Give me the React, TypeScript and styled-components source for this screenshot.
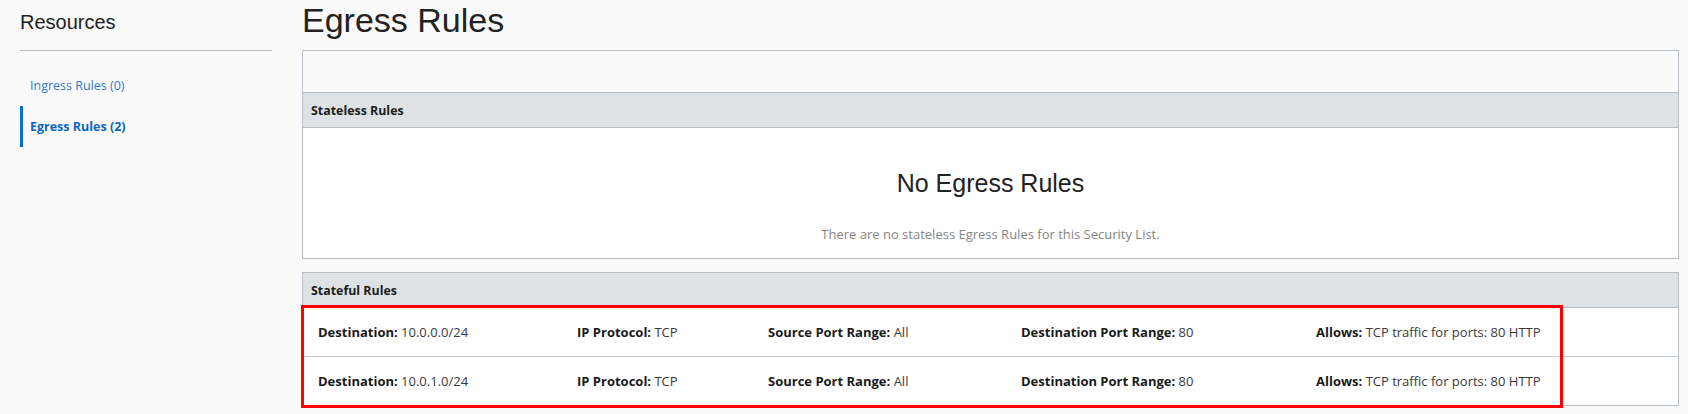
import React from "react";
import styled, { createGlobalStyle } from "styled-components";

const GlobalStyle = createGlobalStyle`
  * { box-sizing: border-box; }
  html, body {
    margin: 0;
    padding: 0;
    background: #fafafa;
    font-family: "Open Sans", "Noto Sans", sans-serif;
    color: #222;
  }
`;

const Page = styled.div`
  display: flex;
  gap: 30px;
  padding: 0 9px 0 20px;
  min-height: 414px;
`;

const Sidebar = styled.aside`
  width: 252px;
  flex-shrink: 0;
`;

const SidebarTitle = styled.h2`
  margin: 10px 0 0;
  font-family: "Liberation Sans", Arial, sans-serif;
  font-weight: 400;
  font-size: 20px;
  line-height: 24px;
  color: #222;
`;

const Divider = styled.hr`
  margin: 16px 0 0;
  border: 0;
  border-top: 1px solid #b4bbc3;
  height: 0;
`;

const NavList = styled.ul`
  list-style: none;
  margin: 14px 0 0;
  padding: 0;
`;

const NavItem = styled.li<{ $active?: boolean }>`
  height: 41px;
  display: flex;
  align-items: center;
  padding-left: 7px;
  border-left: 3px solid ${(p) => (p.$active ? "#0b6fd2" : "transparent")};
  font-size: 12.5px;
  font-weight: ${(p) => (p.$active ? 700 : 400)};
  color: ${(p) => (p.$active ? "#0a66c0" : "#2e7bcb")};
  cursor: pointer;
`;

const Main = styled.main`
  flex: 1;
  min-width: 0;
`;

const PageTitle = styled.h1`
  margin: 0;
  font-family: "Liberation Sans", Arial, sans-serif;
  font-weight: 400;
  font-size: 34px;
  line-height: 40px;
  color: #222;
`;

const Card = styled.section<{ $gap: number }>`
  margin-top: ${(p) => p.$gap}px;
  border: 1px solid #b7bdc4;
  background: #fff;
`;

const Toolbar = styled.div`
  height: 42px;
  background: #fafafa;
  border-bottom: 1px solid #b7bdc4;
`;

const SectionHeader = styled.div`
  height: 35px;
  display: flex;
  align-items: center;
  padding-left: 8px;
  background: #dfe2e5;
  border-bottom: 1px solid #b7bdc4;
  font-size: 12.4px;
  font-weight: 700;
  color: #1c1c1c;
`;

const EmptyBody = styled.div`
  padding: 40px 0 15px;
  text-align: center;
`;

const EmptyTitle = styled.div`
  font-family: "Liberation Sans", Arial, sans-serif;
  font-size: 25px;
  line-height: 30px;
  color: #222;
`;

const EmptyText = styled.div`
  margin-top: 27px;
  font-size: 13px;
  line-height: 18px;
  color: #858585;
`;

const Rows = styled.div`
  position: relative;
`;

const RuleRow = styled.div`
  display: grid;
  grid-template-columns: 259px 191px 253px 295px 1fr;
  align-items: center;
  height: 48px;
  padding-left: 15px;
  font-size: 13px;
  & + & {
    height: 49px;
    border-top: 1px solid #c3c8ce;
  }
`;

const Field = styled.div`
  white-space: nowrap;
  color: #3a3a3a;
`;

const Label = styled.strong`
  font-weight: 700;
  color: #1a1a1a;
`;

const Highlight = styled.div`
  position: absolute;
  top: -3px;
  left: -2px;
  width: 1262px;
  height: 103px;
  border: 3px solid #ff0000;
  pointer-events: none;
`;

const rules = [
  { dest: "10.0.0.0/24" },
  { dest: "10.0.1.0/24" },
];

export default function App() {
  return (
    <>
      <GlobalStyle />
      <Page>
        <Sidebar>
          <SidebarTitle>Resources</SidebarTitle>
          <Divider />
          <NavList>
            <NavItem>Ingress Rules (0)</NavItem>
            <NavItem $active>Egress Rules (2)</NavItem>
          </NavList>
        </Sidebar>
        <Main>
          <PageTitle>Egress Rules</PageTitle>
          <Card $gap={10}>
            <Toolbar />
            <SectionHeader>Stateless Rules</SectionHeader>
            <EmptyBody>
              <EmptyTitle>No Egress Rules</EmptyTitle>
              <EmptyText>There are no stateless Egress Rules for this Security List.</EmptyText>
            </EmptyBody>
          </Card>
          <Card $gap={13}>
            <SectionHeader>Stateful Rules</SectionHeader>
            <Rows>
              {rules.map((r) => (
                <RuleRow key={r.dest}>
                  <Field>
                    <Label>Destination:</Label> {r.dest}
                  </Field>
                  <Field>
                    <Label>IP Protocol:</Label> TCP
                  </Field>
                  <Field>
                    <Label>Source Port Range:</Label> All
                  </Field>
                  <Field>
                    <Label>Destination Port Range:</Label> 80
                  </Field>
                  <Field>
                    <Label>Allows:</Label> TCP traffic for ports: 80 HTTP
                  </Field>
                </RuleRow>
              ))}
              <Highlight />
            </Rows>
          </Card>
        </Main>
      </Page>
    </>
  );
}
